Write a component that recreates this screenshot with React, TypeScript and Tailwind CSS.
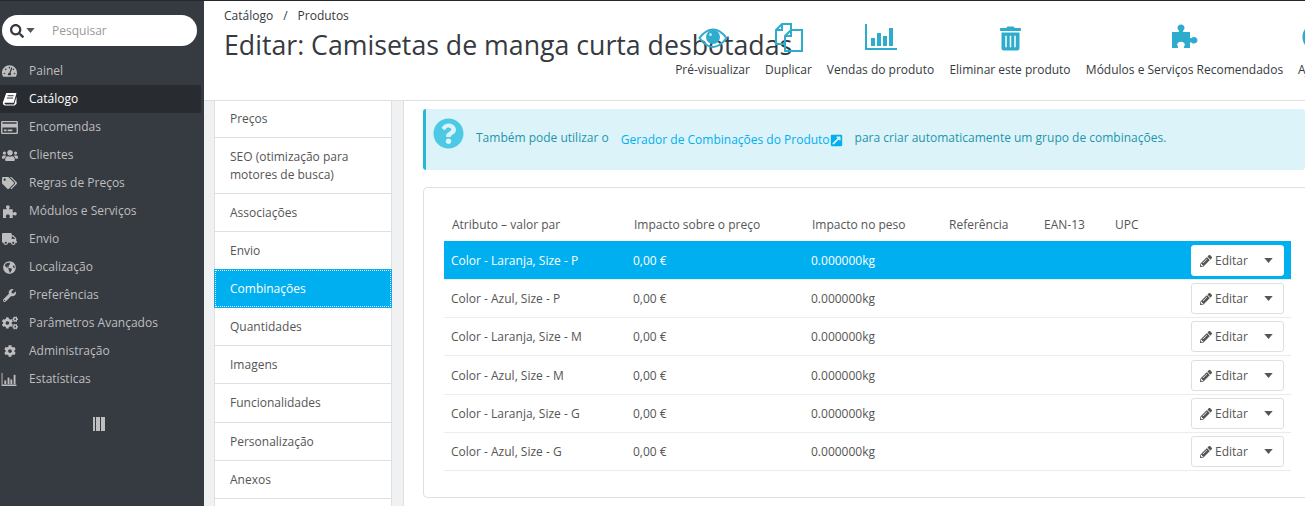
import React from "react";
import {
  FaSearch, FaTachometerAlt, FaRegCreditCard, FaUsers, FaTags,
  FaTruck, FaGlobeAmericas, FaWrench, FaCogs, FaCog, FaQuestionCircle, FaPencilAlt, FaExternalLinkSquareAlt, FaTrashAlt,
} from "react-icons/fa";

const BookIcon = ({ className }: { className?: string }) => (
  <svg className={className} viewBox="0 0 16 15" fill="currentColor">
    <path d="M4.500 1H15.500L12.500 11.500H3.500C2.800 11.500 2.600 12 2.800 12.500C3 13 3.400 13.300 4 13.300H13L15.500 5V12.500L13.500 14.500H3.500C2 14.500 .8 13.200 .8 11.500L4.500 1Z" />
    <path d="M6 4H12.500M5.200 6.500H11.800" stroke="#282b30" strokeWidth="1" />
  </svg>
);
const PuzzleIcon = ({ className }: { className?: string }) => (
  <svg className={className} viewBox="0 0 26 24" fill="currentColor">
    <path d="M0 8H6.200C7.200 8 7.200 7 6.500 6.200C5.800 5.400 5.500 4.800 5.500 3.800C5.500 1.800 7 .5 9 .5S12.500 1.800 12.500 3.800C12.500 4.800 12.200 5.400 11.500 6.200C10.800 7 10.800 8 11.800 8H18V13.500C18 14.500 19 14.500 19.800 13.800C20.500 13.200 21 13 22 13C24 13 25.500 14.500 25.500 16.300S24 19.600 22 19.600C21 19.600 20.500 19.300 19.800 18.700C19 18 18 18 18 19V24H12.500C11.500 24 11.800 23 12.200 22.300C12.600 21.600 12.800 21.200 12.800 20.500C12.800 19 11 17.800 9 17.800S5.200 19 5.200 20.500C5.200 21.200 5.400 21.600 5.800 22.300C6.200 23 6.500 24 5.500 24H0V8Z" />
  </svg>
);
const StatsIcon = ({ className }: { className?: string }) => (
  <svg className={className} viewBox="0 0 16 14" fill="currentColor">
    <path d="M0 0H1V12.500H16V14H0V0Z" />
    <rect x="3" y="8" width="2" height="4" />
    <rect x="6.500" y="5" width="2" height="7" />
    <rect x="9.500" y="7" width="2" height="5" />
    <rect x="13" y="2" width="2" height="10" />
  </svg>
);
const Caret = ({ className }: { className?: string }) => (
  <svg className={className} viewBox="0 0 10 6" fill="currentColor"><path d="M0 0H10L5 6Z" /></svg>
);

const nav: [string, React.ComponentType<{ className?: string }>, string, boolean?][] = [
  ["Painel", FaTachometerAlt, "w-[15px] h-[14px]"],
  ["Catálogo", BookIcon, "w-[15px] h-[14px]", true],
  ["Encomendas", FaRegCreditCard, "w-[17px] h-[15px]"],
  ["Clientes", FaUsers, "w-[16px] h-[15px]"],
  ["Regras de Preços", FaTags, "w-[15px] h-[14px]"],
  ["Módulos e Serviços", PuzzleIcon, "w-[14px] h-[13px]"],
  ["Envio", FaTruck, "w-[15px] h-[14px]"],
  ["Localização", FaGlobeAmericas, "w-[13px] h-[13px]"],
  ["Preferências", FaWrench, "w-[13px] h-[13px]"],
  ["Parâmetros Avançados", FaCogs, "w-[16px] h-[14px]"],
  ["Administração", FaCog, "w-[12px] h-[12px]"],
  ["Estatísticas", StatsIcon, "w-[16px] h-[13px] -ml-[2px]"],
];

const tabs: [string, string][] = [
  ["Preços", "h-[37px]"],
  ["SEO (otimização para motores de busca)", "h-[56px]"],
  ["Associações", "h-[38px]"],
  ["Envio", "h-[38px]"],
  ["Quantidades", "h-[38px]"],
  ["Imagens", "h-[38px]"],
  ["Funcionalidades", "h-[39px]"],
  ["Personalização", "h-[38px]"],
  ["Anexos", "h-[38px]"],
];

const rows: [string, string][] = [
  ["Color - Laranja, Size - P", "h-[39px] pt-[1px]"],
  ["Color - Azul, Size - P", "h-[38px]"],
  ["Color - Laranja, Size - M", "h-[38px]"],
  ["Color - Azul, Size - M", "h-[39px] pt-[1px]"],
  ["Color - Laranja, Size - G", "h-[38px]"],
  ["Color - Azul, Size - G", "h-[38px]"],
];

const EyeIcon = () => (
  <svg width="32" height="28" viewBox="0 0 32 28" fill="none">
    <path d="M2.500 15C7 9 11 6.500 16 6.500S25 9 29.500 15C25 21 21 24 16 24S7 21 2.500 15Z" stroke="#2eacce" strokeWidth="2" />
    <circle cx="16" cy="14" r="7" fill="#2eacce" />
    <circle cx="13.500" cy="11.500" r="1.500" fill="#bfe6f0" />
  </svg>
);
const DuplicateIcon = () => (
  <svg width="28" height="29" viewBox="0 0 28 29" fill="none" stroke="#2eacce" strokeWidth="2" className="mb-[-1px]">
    <path d="M10 21H1V7L7 1H16V7" />
    <path d="M7 1V7H1" />
    <path d="M16 7H27V28H10V13L16 7Z" />
    <path d="M16 7V13H10" />
  </svg>
);
const SalesIcon = () => (
  <svg width="32" height="28" viewBox="0 0 32 28">
    <path d="M1 1v25h31" fill="none" stroke="#2eacce" strokeWidth="2" />
    <rect x="6" y="15" width="4" height="8" fill="#2eacce" />
    <rect x="12" y="10" width="4" height="13" fill="#2eacce" />
    <rect x="18" y="13" width="4" height="10" fill="#2eacce" />
    <rect x="24" y="5" width="4" height="18" fill="#2eacce" />
  </svg>
);
const Tool = ({ label, icon, w, start }: { label: string; icon?: React.ReactNode; w: string; start?: boolean }) => (
  <div className={`flex flex-col items-center shrink-0 ${w}`}>
    <div className="h-[37px] flex items-end justify-center">{icon}</div>
    <span className={`mt-[11px] text-[12px] leading-[16px] text-[#363a41] whitespace-nowrap ${start ? "self-start" : ""}`}>{label}</span>
  </div>
);
const Tab = ({ label, h }: { label: string; h: string }) => (
  <div className={`${h} shrink-0 flex items-center leading-[18px] border-b border-[#dfdfdf] px-[15px] text-[#555]`}>
    <span>{label}</span>
  </div>
);

export default function App() {
  return (
    <div className="h-[506px] w-[1305px] overflow-hidden flex bg-[#eff1f2] border-t border-[#25272b] text-[12px] text-[#555]" style={{ fontFamily: '"Open Sans", sans-serif' }}>
      <aside className="w-[204px] shrink-0 bg-[#363a41] flex flex-col">
        <div className="h-[31px] w-[195px] ml-[2px] mt-[14px] mb-[11px] rounded-[16px] bg-white flex items-center pl-[8px] text-[#363a41]">
          <FaSearch className="w-[14px] h-[14px]" />
          <Caret className="w-[9px] h-[5px] ml-[2px] text-[#555]" />
          <span className="ml-[17px] text-[#999]">Pesquisar</span>
        </div>
        {nav.map(([label, Icon, size, active]) => (
          <div key={label} className={`h-[28px] w-[201px] flex items-center shrink-0 ${active ? "bg-[#282b30] text-white" : "text-[#bebebe]"}`}>
            <span className="w-[29px] flex justify-center pr-[10px] shrink-0"><Icon className={size} /></span>
            <span>{label}</span>
          </div>
        ))}
        <div className="ml-[93px] mt-[24px] w-[12px] h-[14px] flex justify-between">
          {[0, 1, 2, 3, 4].map((i) => <span key={i} className="w-[2px] h-full bg-[#bebebe]" />)}
        </div>
      </aside>

      <div className="flex-1 min-w-0 flex flex-col">
        <header className="relative h-[100px] shrink-0 bg-white border-b border-[#dfdfdf] pl-[20px]">
          <div className="pt-[7px] leading-[16px] text-[#363a41] flex">
            <span>Catálogo</span><span className="ml-[10px]">/</span><span className="ml-[10px]">Produtos</span>
          </div>
          <h1 className="mt-[3px] text-[26.7px] leading-[36px] text-[#363a41] whitespace-nowrap">Editar: Camisetas de manga curta desbotadas</h1>
          <div className="absolute left-[471px] top-[13px] flex gap-[15px]">
            <Tool w="w-[75px]" label="Pré-visualizar" icon={<EyeIcon />} />
            <Tool w="w-[47px]" label="Duplicar" icon={<DuplicateIcon />} />
            <Tool w="w-[107px]" label="Vendas do produto" icon={<SalesIcon />} />
            <Tool w="w-[122px]" label="Eliminar este produto" icon={<FaTrashAlt className="w-[21px] h-[25px] text-[#2eacce]" />} />
            <Tool w="w-[197px]" label="Módulos e Serviços Recomendados" icon={<PuzzleIcon className="w-[26px] h-[24px] mb-[3px] text-[#2eacce]" />} />
            <Tool w="w-[36px]" start label="Ajuda" icon={<FaQuestionCircle className="w-[28px] h-[28px] text-[#2eacce]" />} />
          </div>
        </header>

        <div className="flex-1 flex min-h-0">
          <nav className="ml-[10px] w-[178px] shrink-0 bg-white border-x border-[#dfdfdf] flex flex-col">
            {tabs.slice(0, 4).map(([label, h]) => <Tab key={label} label={label} h={h} />)}
            <div className="h-[39px] shrink-0 -mt-[1px] -mx-[1px] p-[1px] bg-[#00aff0] text-white">
              <div className="h-full flex items-center pl-[14px] leading-[18px] border border-dotted border-white">
                <span>Combinações</span>
              </div>
            </div>
            {tabs.slice(4).map(([label, h]) => <Tab key={label} label={label} h={h} />)}
          </nav>

          <main className="ml-[11px] flex-1 min-w-0 bg-white border-l border-[#dfdfdf] pl-[19px] pt-[8px]">
            <div className="h-[61px] rounded-[3px] bg-[#dcf4f9] border-l-[3px] border-[#25b9d7] flex text-[#1e94ab]">
              <FaQuestionCircle className="ml-[7px] mt-[9px] w-[31px] h-[31px] text-[#4bc9e5] shrink-0" />
              <span className="ml-[12px] mt-[21px] leading-[16px] h-[16px]">Também pode utilizar o</span>
              <span className="ml-[12px] mt-[23px] leading-[16px] h-[16px] text-[#00aff0] flex items-center">Gerador de Combinações do Produto<FaExternalLinkSquareAlt className="w-[13px] h-[13px]" /></span>
              <span className="ml-[12px] mt-[21px] leading-[16px] h-[16px]">para criar automaticamente um grupo de combinações.</span>
            </div>

            <section className="mt-[17px] h-[311px] rounded-l-[5px] border border-r-0 border-[#dfdfdf] pl-[20px] pr-[14px] pt-[21px]">
              <div className="grid grid-cols-[182px_178px_137px_95px_71px_1fr] h-[32px] items-center pl-[8px] text-[#555]">
                <span>Atributo – valor par</span><span>Impacto sobre o preço</span><span>Impacto no peso</span><span>Referência</span><span>EAN-13</span><span>UPC</span>
              </div>
              {rows.map(([label, h], i) => (
                <div key={label} className={`${h} grid grid-cols-[182px_178px_1fr_auto] items-center pl-[7px] pr-[7px] border-b border-[#eaedef] ${i === 0 ? "bg-[#00aff0] text-white" : "text-[#555]"}`}>
                  <span>{label}</span>
                  <span>0,00 €</span>
                  <span>0.000000kg</span>
                  <div className={`w-[93px] h-[31px] rounded-[3px] bg-white border flex items-center pl-[8px] text-[#555] ${i === 0 ? "border-white" : "border-[#dfdfdf]"}`}>
                    <FaPencilAlt className="w-[12px] h-[12px]" />
                    <span className="ml-[3px]">Editar</span>
                    <Caret className="ml-[16px] w-[9px] h-[5px]" />
                  </div>
                </div>
              ))}
            </section>
          </main>
        </div>
      </div>
    </div>
  );
}
